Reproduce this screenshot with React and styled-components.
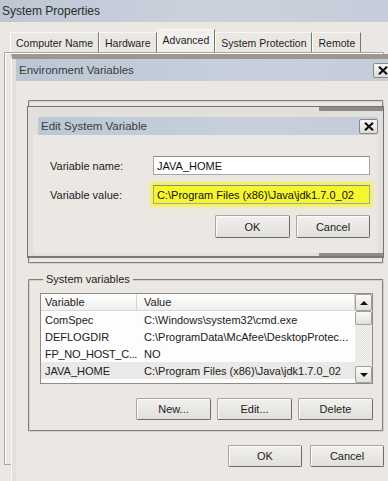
import React from 'react'
import styled, { createGlobalStyle } from 'styled-components'

const GlobalStyle = createGlobalStyle`
  html, body { margin: 0; padding: 0; }
  body {
    font-family: 'Liberation Sans', Arial, sans-serif;
    font-size: 11px;
    color: #1c1c1c;
    background: #ebe8e4;
  }
  * { box-sizing: border-box; }
`

const Desktop = styled.div`
  position: relative;
  width: 388px;
  height: 481px;
  overflow: hidden;
  background: #ebe8e4;
`

const SysWindow = styled.div`
  display: flex;
  flex-direction: column;
  height: 100%;
`

const SysTitle = styled.div`
  height: 22px;
  padding-left: 2px;
  display: flex;
  align-items: center;
  background: linear-gradient(to right, #bdc7d4, #cad2dd 55%, #c4cdd9);
  font-size: 12px;
  color: #2b2b2b;
`

const TabStrip = styled.div`
  display: flex;
  align-items: flex-end;
  height: 22px;
  margin: 8px 0 0 10px;
`

const Tab = styled.div`
  height: ${p => (p.$active ? 23 : 20)}px;
  padding: 0 5px ${p => (p.$active ? 3 : 0)}px;
  display: flex;
  align-items: center;
  font-size: 10.5px;
  border-left: 1px solid #fdfdfc;
  border-right: 1px solid #7a7672;
  border-top: 1px solid #f8f7f5;
  background: ${p => (p.$active ? '#f2f0ed' : '#ebe8e4')};
`

const TabPage = styled.div`
  flex: 1;
  margin: 0 4px 16px 4px;
  border: 1px solid #aaa6a1;
  box-shadow: inset 1px 1px 0 #fff;
`

const EnvWindow = styled.div`
  position: absolute;
  left: 11px;
  top: 54px;
  width: 395px;
  height: 430px;
  border-top: 5px solid #9e9790;
  border-left: 1px solid #fbfaf8;
  background: #e3e1dd;
  padding-left: 4px;
  display: flex;
  flex-direction: column;
`

const WinTitle = styled.div`
  height: ${p => p.$h}px;
  flex-shrink: 0;
  display: flex;
  align-items: center;
  padding-left: 3px;
  padding-right: ${p => p.$pr}px;
  background: linear-gradient(to right, #bcc7d5, #c7d0dc 60%, #c3ccd8);
  font-size: 11.5px;
  color: #3a3a3a;
`

const CloseBtn = styled.div`
  margin-left: auto;
  width: 19px;
  height: 15px;
  display: flex;
  align-items: center;
  justify-content: center;
  border: 1px solid #8b8884;
  border-radius: 2px;
  background: linear-gradient(#f7f7f6, #dedcd9);
`

const EnvClient = styled.div`
  flex: 1;
  background: #ebe8e4;
  padding: 19px 0 0 12px;
`

const GroupBox = styled.fieldset`
  margin: ${p => p.$mt || 0}px 0 0 0;
  padding: 7px 9px 10px 10px;
  width: 356px;
  min-width: 0;
  height: ${p => (p.$h ? `${p.$h}px` : 'auto')};
  border: 2px groove #d4d0cb;
  border-radius: 2px;
`

const Legend = styled.legend`
  padding: 0 3px;
  margin-left: 3px;
  font-size: 11px;
  line-height: 13px;
`

const ListView = styled.div`
  width: 333px;
  height: 91px;
  display: flex;
  border: 1px solid #8f8c88;
  background: #fdfdfd;
`

const Table = styled.div`
  flex: 1;
  display: flex;
  flex-direction: column;
`

const HeaderRow = styled.div`
  display: grid;
  grid-template-columns: 96px 1fr;
  height: 17px;
  background: linear-gradient(#ffffff, #f0efed);
  border-bottom: 1px solid #dcdad7;
`

const HeaderCell = styled.div`
  display: flex;
  align-items: center;
  padding-left: ${p => p.$pad}px;
  border-right: 1px solid #d8d6d3;
`

const Row = styled.div`
  display: grid;
  grid-template-columns: 96px 1fr;
  height: 17px;
  background: ${p => (p.$sel ? '#ebe9e7' : 'transparent')};
`

const Cell = styled.div`
  display: flex;
  align-items: center;
  padding-left: ${p => p.$pad}px;
  white-space: nowrap;
  letter-spacing: ${p => (p.$tight ? '-0.3px' : '0')};
  color: #202020;
`

const ScrollBar = styled.div`
  width: 17px;
  display: flex;
  flex-direction: column;
  background: repeating-conic-gradient(#f4f3f1 0 25%, #e4e2df 0 50%) 0 0 / 2px 2px;
`

const ScrollPart = styled.div`
  height: ${p => p.$h}px;
  display: flex;
  align-items: center;
  justify-content: center;
  border: 1px solid #a3a09c;
  border-radius: 2px;
  background: linear-gradient(#fafaf9, #e2e0dd);
`

const Track = styled.div`
  flex: 1;
`

const Arrow = styled.span`
  width: 0;
  height: 0;
  border-left: 4px solid transparent;
  border-right: 4px solid transparent;
  ${p => (p.$down ? 'border-top: 4px solid #111;' : 'border-bottom: 4px solid #111;')}
`

const ButtonRow = styled.div`
  display: flex;
  justify-content: flex-end;
  gap: ${p => p.$gap || 6}px;
  margin-top: ${p => p.$mt}px;
  width: ${p => (p.$w ? `${p.$w}px` : 'auto')};
`

const Button = styled.button`
  width: ${p => p.$w || 75}px;
  height: ${p => p.$h || 22}px;
  padding: 0;
  font: inherit;
  font-size: 11px;
  color: #1c1c1c;
  border: 1px solid;
  border-color: #a9a6a2 #6e6a66 #6e6a66 #a9a6a2;
  border-radius: 2px;
  background: linear-gradient(#f1f0ee, #e2e0dc);
  box-shadow: inset 1px 1px 0 #fbfbfa;
`

const Dialog = styled.div`
  position: absolute;
  left: 27px;
  top: 106px;
  width: 357px;
  height: 152px;
  border: 1px solid #77736f;
  border-bottom: 2px solid #7d7873;
  background:
    linear-gradient(to right, transparent 0 82%, #8f8a85 82% 100%) top / 100% 4px no-repeat,
    linear-gradient(to right, transparent 0 82%, #8f8a85 82% 100%) bottom / 100% 3px no-repeat,
    #e2e0dc;
  padding: 10px 5px 3px 5px;
  display: flex;
  flex-direction: column;
`

const DialogTitle = styled(WinTitle)`
  margin-left: 5px;
`

const DialogClient = styled.div`
  flex: 1;
  background: #ebe8e4;
  padding: 21px 8px 0 17px;
`

const FieldGrid = styled.div`
  display: grid;
  grid-template-columns: 103px 217px;
  row-gap: 10px;
  align-items: center;
`

const Label = styled.label`
  font-size: 11px;
`

const Field = styled.input`
  height: 19px;
  width: 100%;
  padding: 0 3px;
  font: inherit;
  font-size: 11px;
  color: #111;
  border: 1px solid #a9a6a2;
  border-top-color: #8e8b87;
  outline: none;
  background: ${p => (p.$hl ? '#f6f62e' : '#fff')};
  box-shadow: ${p => (p.$hl ? '0 0 3px 3px #f2f258' : 'none')};
`

function CloseIcon() {
  return (
    <svg width="10" height="9" viewBox="0 0 10 9">
      <path d="M1 0.8 L9 8.2 M9 0.8 L1 8.2" stroke="#111" strokeWidth="2.2" fill="none" />
    </svg>
  )
}

const systemVars = [
  ['ComSpec', 'C:\\Windows\\system32\\cmd.exe'],
  ['DEFLOGDIR', 'C:\\ProgramData\\McAfee\\DesktopProtec...'],
  ['FP_NO_HOST_C...', 'NO'],
  ['JAVA_HOME', 'C:\\Program Files (x86)\\Java\\jdk1.7.0_02'],
]

const tabs = ['Computer Name', 'Hardware', 'Advanced', 'System Protection', 'Remote']

export default function App() {
  return (
    <Desktop>
      <GlobalStyle />
      <SysWindow>
        <SysTitle>System Properties</SysTitle>
        <TabStrip>
          {tabs.map(t => (
            <Tab key={t} $active={t === 'Advanced'}>{t}</Tab>
          ))}
        </TabStrip>
        <TabPage />
      </SysWindow>

      <EnvWindow>
        <WinTitle $h={22} $pr={14}>
          Environment Variables
          <CloseBtn><CloseIcon /></CloseBtn>
        </WinTitle>
        <EnvClient>
          <GroupBox $h={164} />
          <GroupBox $mt={9}>
            <Legend>System variables</Legend>
            <ListView>
              <Table>
                <HeaderRow>
                  <HeaderCell $pad={4}>Variable</HeaderCell>
                  <HeaderCell $pad={7}>Value</HeaderCell>
                </HeaderRow>
                {systemVars.map(([name, value]) => (
                  <Row key={name} $sel={name === 'JAVA_HOME'}>
                    <Cell $pad={4} $tight={name.length > 12}>{name}</Cell>
                    <Cell $pad={7}>{value}</Cell>
                  </Row>
                ))}
              </Table>
              <ScrollBar>
                <ScrollPart $h={17}><Arrow /></ScrollPart>
                <ScrollPart $h={14} />
                <Track />
                <ScrollPart $h={17}><Arrow $down /></ScrollPart>
              </ScrollBar>
            </ListView>
            <ButtonRow $mt={14}>
              <Button>New...</Button>
              <Button>Edit...</Button>
              <Button>Delete</Button>
            </ButtonRow>
          </GroupBox>
          <ButtonRow $mt={13} $gap={8} $w={356}>
            <Button $w={74}>OK</Button>
            <Button $w={74}>Cancel</Button>
          </ButtonRow>
        </EnvClient>
      </EnvWindow>

      <Dialog>
        <DialogTitle $h={18} $pr={0}>
          Edit System Variable
          <CloseBtn><CloseIcon /></CloseBtn>
        </DialogTitle>
        <DialogClient>
          <FieldGrid>
            <Label>Variable name:</Label>
            <Field readOnly defaultValue="JAVA_HOME" />
            <Label>Variable value:</Label>
            <Field $hl readOnly defaultValue="C:\Program Files (x86)\Java\jdk1.7.0_02" />
          </FieldGrid>
          <ButtonRow $mt={11} $w={320}>
            <Button $h={23}>OK</Button>
            <Button $h={23} $w={74}>Cancel</Button>
          </ButtonRow>
        </DialogClient>
      </Dialog>
    </Desktop>
  )
}
